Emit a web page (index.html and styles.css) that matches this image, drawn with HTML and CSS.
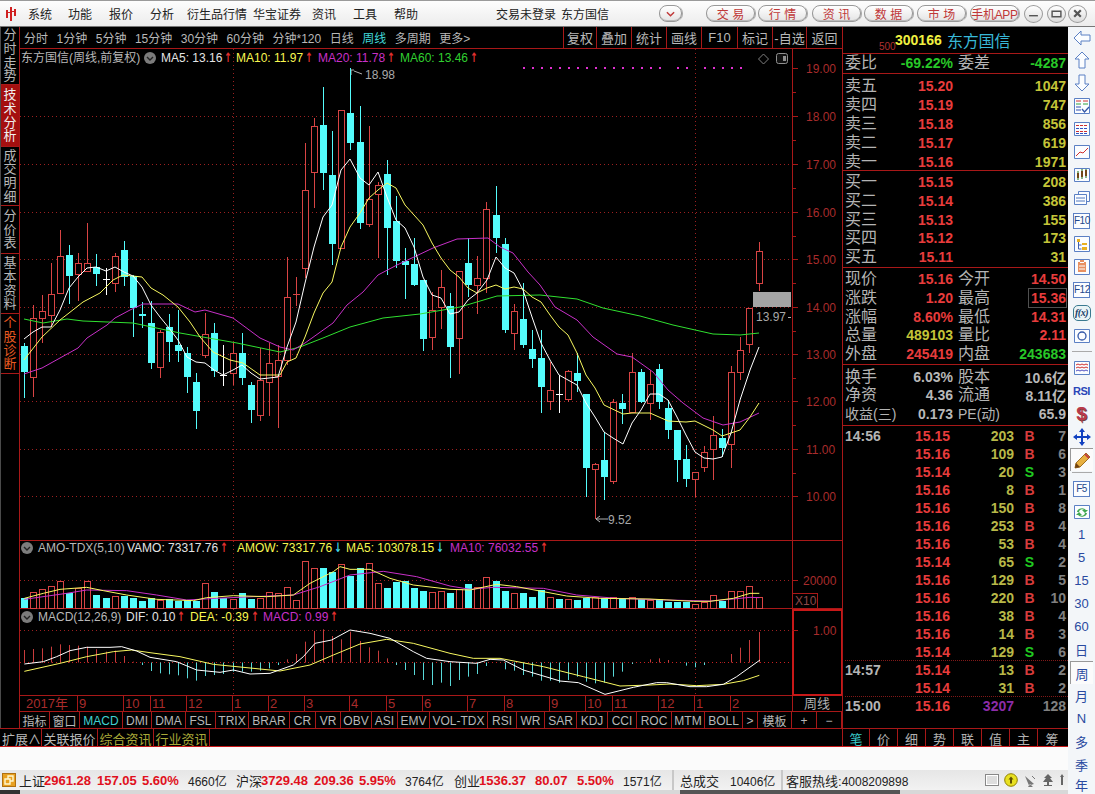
FILE: index.html
```html
<!DOCTYPE html>
<html lang="zh">
<head>
<meta charset="utf-8">
<title>东方国信 周线</title>
<link rel="stylesheet" href="styles.css">
</head>
<body>
<div class="app">
  <header class="top">
    <svg class="logo" viewBox="0 0 12 16"><path d="M1 4h2v8H1zM5 1h2v14H5zM9 3h2v7H9z"/><path d="M3 6h2v1H3zM7 5h2v1H7z"/></svg>
    <span>系统</span><span>功能</span><span>报价</span><span>分析</span><span>衍生品行情</span><span>华宝证券</span><span>资讯</span><span>工具</span><span>帮助</span>
    <span>交易未登录</span><span>东方国信</span>
    <button class="btn small"><svg viewBox="0 0 10 6" class="caret"><path d="M1 1l4 4 4-4"/></svg></button>
    <button class="btn">交 易</button><button class="btn">行 情</button><button class="btn">资 讯</button><button class="btn">数 据</button><button class="btn">市 场</button><button class="btn app-btn">手机APP</button>
    <button class="win"><svg viewBox="0 0 10 10"><path d="M1 7h8"/></svg></button>
    <button class="win"><svg viewBox="0 0 10 10"><path d="M1 3h8v5H1z"/></svg></button>
    <button class="win"><svg viewBox="0 0 10 10"><path class="heavy" d="M2 2l6 6M8 2l-6 6"/></svg></button>
  </header>

  <div class="mid">
    <div class="workspace">
      <div class="dark">
        <div class="chart-col">
          <div class="chart-main">
            <nav class="strip">
              <div>分时走势</div><div class="on">技术分析</div><div>成交明细</div><div>分价表</div><div>基本资料</div><div class="diag">个股诊断</div><div class="blank"></div>
            </nav>
            <div class="center">
              <div class="toolbar">
                <div class="periods">
                  <span>分时</span><span>1分钟</span><span>5分钟</span><span>15分钟</span><span>30分钟</span><span>60分钟</span><span>分钟*120</span><span>日线</span><span class="cur">周线</span><span>多周期</span><span>更多&gt;</span>
                </div>
                <div class="tools">
                  <span>复权</span><span>叠加</span><span>统计</span><span>画线</span><span>F10</span><span>标记</span><span>-自选</span><span>返回</span>
                </div>
              </div>
              <div class="chart">
                <svg id="plot" class="plot" viewBox="20 49 822 662" width="822" height="662"></svg>
                <div class="legend legend-k">
                  <span class="name">东方国信(周线,前复权)</span>
                  <svg class="chev" viewBox="0 0 12 12"><circle cx="6" cy="6" r="6"/><path d="M3 5l3 3 3-3"/></svg>
                  <span class="white">MA5: 13.16<b class="up">↑</b></span>
                  <span class="yellow">MA10: 11.97<b class="up">↑</b></span>
                  <span class="purple">MA20: 11.78<b class="up">↑</b></span>
                  <span class="green">MA60: 13.46<b class="up">↑</b></span>
                </div>
                <div class="legend legend-v">
                  <svg class="chev" viewBox="0 0 12 12"><circle cx="6" cy="6" r="6"/><path d="M3 5l3 3 3-3"/></svg>
                  <span class="name">AMO-TDX(5,10)</span>
                  <span class="white">VAMO: 73317.76<b class="up">↑</b></span>
                  <span class="yellow">AMOW: 73317.76<b class="dn">↓</b></span>
                  <span class="yellow">MA5: 103078.15<b class="dn">↓</b></span>
                  <span class="purple">MA10: 76032.55<b class="up">↑</b></span>
                </div>
                <div class="legend legend-m">
                  <svg class="chev" viewBox="0 0 12 12"><circle cx="6" cy="6" r="6"/><path d="M3 5l3 3 3-3"/></svg>
                  <span class="name">MACD(12,26,9)</span>
                  <span class="white">DIF: 0.10<b class="up">↑</b></span>
                  <span class="yellow">DEA: -0.39<b class="up">↑</b></span>
                  <span class="purple">MACD: 0.99<b class="up">↑</b></span>
                </div>
              </div>
              <div class="indicators">
                <span>指标</span><span>窗口</span><span class="cur">MACD</span><span>DMI</span><span>DMA</span><span>FSL</span><span>TRIX</span><span>BRAR</span><span>CR</span><span>VR</span><span>OBV</span><span>ASI</span><span>EMV</span><span>VOL-TDX</span><span>RSI</span><span>WR</span><span>SAR</span><span>KDJ</span><span>CCI</span><span>ROC</span><span>MTM</span><span>BOLL</span><span>&gt;</span><span>模板</span><span>+</span><span>−</span>
              </div>
            </div>
          </div>
          <div class="ext">
            <span>扩展∧</span><span>关联报价</span><span class="gold">综合资讯</span><span class="gold">行业资讯</span>
          </div>
        </div>

        <aside class="quote">
          <div class="q-head"><small>500</small><b>300166</b><span>东方国信</span></div>
          <div class="q-block q-ratio">
            <div class="q-row"><span>委比</span><b class="g">-69.22%</b><span>委差</span><b class="g">-4287</b></div>
          </div>
          <div class="q-block q-five q-first">
            <div class="q-row"><span>卖五</span><b class="r">15.20</b><span></span><b class="y">1047</b></div>
            <div class="q-row"><span>卖四</span><b class="r">15.19</b><span></span><b class="y">747</b></div>
            <div class="q-row"><span>卖三</span><b class="r">15.18</b><span></span><b class="y">856</b></div>
            <div class="q-row"><span>卖二</span><b class="r">15.17</b><span></span><b class="y">619</b></div>
            <div class="q-row"><span>卖一</span><b class="r">15.16</b><span></span><b class="y">1971</b></div>
          </div>
          <div class="q-block q-five">
            <div class="q-row"><span>买一</span><b class="r">15.15</b><span></span><b class="y">208</b></div>
            <div class="q-row"><span>买二</span><b class="r">15.14</b><span></span><b class="y">386</b></div>
            <div class="q-row"><span>买三</span><b class="r">15.13</b><span></span><b class="y">155</b></div>
            <div class="q-row"><span>买四</span><b class="r">15.12</b><span></span><b class="y">173</b></div>
            <div class="q-row"><span>买五</span><b class="r">15.11</b><span></span><b class="y">31</b></div>
          </div>
          <div class="q-block q-five">
            <div class="q-row"><span>现价</span><b class="r">15.16</b><span>今开</span><b class="r">14.50</b></div>
            <div class="q-row"><span>涨跌</span><b class="r">1.20</b><span>最高</span><b class="r"><em class="boxed">15.36</em></b></div>
            <div class="q-row"><span>涨幅</span><b class="r">8.60%</b><span>最低</span><b class="r">14.31</b></div>
            <div class="q-row"><span>总量</span><b class="y">489103</b><span>量比</span><b class="r">2.11</b></div>
            <div class="q-row"><span>外盘</span><b class="r">245419</b><span>内盘</span><b class="g">243683</b></div>
          </div>
          <div class="q-block q-info">
            <div class="q-row"><span>换手</span><b class="w">6.03%</b><span>股本</span><b class="w">10.6亿</b></div>
            <div class="q-row"><span>净资</span><b class="w">4.36</b><span>流通</span><b class="w">8.11亿</b></div>
            <div class="q-row"><span class="nw">收益(三)</span><b class="w">0.173</b><span class="nw">PE(动)</span><b class="w">65.9</b></div>
          </div>
          <div class="trades">
            <div class="t-row"><i>14:56</i><b>15.15</b><u>203</u><s class="buy">B</s><em>7</em></div>
            <div class="t-row"><i></i><b>15.16</b><u>109</u><s class="buy">B</s><em>6</em></div>
            <div class="t-row"><i></i><b>15.14</b><u>20</u><s class="sell">S</s><em>3</em></div>
            <div class="t-row"><i></i><b>15.16</b><u>8</u><s class="buy">B</s><em>1</em></div>
            <div class="t-row"><i></i><b>15.16</b><u>150</u><s class="buy">B</s><em>8</em></div>
            <div class="t-row"><i></i><b>15.16</b><u>253</u><s class="buy">B</s><em>4</em></div>
            <div class="t-row"><i></i><b>15.16</b><u>53</u><s class="buy">B</s><em>4</em></div>
            <div class="t-row"><i></i><b>15.14</b><u>65</u><s class="sell">S</s><em>2</em></div>
            <div class="t-row"><i></i><b>15.16</b><u>129</u><s class="buy">B</s><em>5</em></div>
            <div class="t-row"><i></i><b>15.16</b><u>220</u><s class="buy">B</s><em>10</em></div>
            <div class="t-row"><i></i><b>15.16</b><u>38</u><s class="buy">B</s><em>4</em></div>
            <div class="t-row"><i></i><b>15.16</b><u>14</u><s class="buy">B</s><em>3</em></div>
            <div class="t-row minute"><i></i><b>15.14</b><u>129</u><s class="sell">S</s><em>6</em></div>
            <div class="t-row"><i>14:57</i><b>15.14</b><u>13</u><s class="buy">B</s><em>2</em></div>
            <div class="t-row minute"><i></i><b>15.14</b><u>31</u><s class="buy">B</s><em>2</em></div>
            <div class="t-row"><i>15:00</i><b>15.16</b><u class="big">3207</u><s></s><em>128</em></div>
          </div>
          <div class="q-tabs">
            <span class="cur">笔</span><span>价</span><span>细</span><span>势</span><span>联</span><span>值</span><span>主</span><span>筹</span>
          </div>
        </aside>
      </div>

      <div class="blankband"></div>

      <footer class="status">
        <svg class="st-ico" viewBox="0 0 14 14"><rect x=".5" y=".5" width="13" height="13" fill="#e8a020" stroke="#b07010"/><path d="M3 11V6h5v5zM6 6V3h5v5H8" fill="none" stroke="#fff8d0" stroke-width="1.4"/></svg>
        <span>上证</span><b>2961.28</b><b>157.05</b><b>5.60%</b><span class="sm">4660亿</span>
        <span>沪深</span><b>3729.48</b><b>209.36</b><b>5.95%</b><span class="sm">3764亿</span>
        <span>创业</span><b>1536.37</b><b>80.07</b><b>5.50%</b><span class="sm">1571亿</span>
        <i></i>
        <span>总成交</span><span class="sm">10406亿</span>
        <i></i>
        <span>客服热线:<span class="sm">4008209898</span></span>
        <div class="tray">
          <svg viewBox="0 0 14 14" width="14" height="14"><rect x=".5" y="1.5" width="13" height="11" fill="#fff" stroke="#888"/><path d="M2 4h10M2 6h10M2 8h10M2 10h10" stroke="#bbb"/></svg>
          <svg viewBox="0 0 14 14" width="14" height="14"><circle cx="7" cy="7" r="6.3" fill="#e8e020" stroke="#908000"/><path d="M7 3.5l2.5 3H8v4H6v-4H4.500z" fill="#605000"/></svg>
          <svg viewBox="0 0 14 14" width="14" height="14"><path d="M2 3l9 8-5 1.500zM7 11l-2 3h5z" fill="#777"/><path d="M9 3l3 3" stroke="#777"/></svg>
          <svg viewBox="0 0 12 14" width="12" height="14"><path d="M6 1l4 4H8l3 4H7v3h3v1H2v-1h3V9H1l3-4H2z" fill="#666"/></svg>
          <svg viewBox="0 0 6 14" width="6" height="14"><path d="M3 1l2 3H4v8H2V4H1z" fill="#666"/></svg>
        </div>
      </footer>
      <div class="foot"></div>
    </div>

    <aside class="rail">
      <div class="it"><svg viewBox="0 0 20 20"><path class="o" d="M2 10l7-7v4h9v6H9v4z"/></svg></div>
      <div class="it"><svg viewBox="0 0 20 20"><path class="o" d="M10 2l7 7h-4v9H7V9H3z"/></svg></div>
      <div class="it"><svg viewBox="0 0 20 20"><path class="o" d="M10 18l7-7h-4V2H7v9H3z"/></svg></div>
      <div class="it"><svg viewBox="0 0 20 20"><path class="o" d="M2.500 2.500h15v15h-15z"/><path d="M4 5h5M11 5h5" stroke="#d03030"/><path d="M4 8h5M11 8h5" stroke="#30a040"/><path d="M4 11h5M4 14h5" stroke="#3050b0"/><path d="M10 13l2.500 3 4.500-5" class="o2"/></svg></div>
      <div class="it"><svg viewBox="0 0 20 20"><path class="o" d="M2.500 3.500h15v13h-15z"/><path d="M4 6.500h12" stroke="#d03030" stroke-dasharray="3 1"/><path d="M4 9.500h12" stroke="#3050c0" stroke-dasharray="3 1"/><path d="M4 12.500h12" stroke="#d03030" stroke-dasharray="3 1"/><path d="M4 14.500h12" stroke="#3050c0" stroke-dasharray="3 1"/></svg></div>
      <div class="it"><svg viewBox="0 0 20 20"><path class="o" d="M2.500 3.500h15v13h-15z"/><path d="M4 14l4-4 3 1 5-5" fill="none" stroke="#d03030"/></svg></div>
      <div class="it"><svg viewBox="0 0 20 20"><path class="o" d="M2.500 3.500h15v13h-15z"/><path d="M5 8h2v5H5zM9 6h2v6H9zM13 5h2v6h-2z" fill="#d02020"/><path d="M6 6v9M10 4v10M14 4v9" stroke="#107010"/></svg></div>
      <div class="it"><svg viewBox="0 0 20 20"><path class="o" d="M6.500 3.500h11v10h-11z"/><path class="o" d="M2.500 6.500h12v10h-12z"/><path d="M4 10h9M4 13h9" stroke="#5078c0"/></svg></div>
      <div class="it"><span class="fk">F10</span></div>
      <div class="it"><svg viewBox="0 0 20 20"><path class="o" d="M2.500 2.500h15v15h-15z"/><path d="M5 5h3v3H5z" fill="#e8b020"/><path d="M6.500 8v7h3M6.500 11h3" stroke="#4060b0" fill="none"/><path d="M10 9h5v2h-5zM10 13h5v3h-5z" fill="#e8b020"/></svg></div>
      <div class="it"><svg viewBox="0 0 20 20"><path class="o" d="M2.500 2.500h15v15h-15z"/><path d="M6 5h8v10H6zM8 3v3h4V3" fill="#e89060"/><path d="M7 9h6M7 12h6" stroke="#fff"/></svg></div>
      <div class="it"><span class="fk">F12</span></div>
      <div class="it"><span class="fx">f(x)</span></div>
      <div class="it"><svg viewBox="0 0 20 20"><path class="o" d="M2.500 3.500h15v13h-15z"/><circle cx="10" cy="10" r="4" class="o2"/></svg></div>
      <div class="rule rule-a"></div>
      <div class="it"><svg viewBox="0 0 20 20"><path class="o" d="M2.500 3.500h15v13h-15z"/><path d="M4 7l2-1 2 1 2-1 2 1 2-1 2 1M4 10l2-1 2 1 2-1 2 1 2-1 2 1" fill="none" stroke="#d03030"/><path d="M4 13l2-1 2 1 2-1 2 1 2-1 2 1" fill="none" stroke="#5050c0"/></svg></div>
      <div class="it"><span class="rsi">RSI</span></div>
      <div class="it"><span class="dollar">$</span></div>
      <div class="it"><svg viewBox="0 0 20 20"><path d="M10 1l3 4h-2v4h4V7l4 3-4 3v-2h-4v4h2l-3 4-3-4h2v-4H5v2l-4-3 4-3v2h4V5H7z" fill="#1040c0"/></svg></div>
      <div class="it sel"><svg viewBox="0 0 20 20"><path d="M3 18l1-5L14 3l4 4L8 17z" fill="#e8b040" stroke="#a07020"/><path d="M3 18l1-5 4 4z" fill="#704010"/><path d="M13 4l4 4" stroke="#c04040" stroke-width="2"/></svg></div>
      <div class="rule rule-b"></div>
      <div class="it"><span class="fk">F5</span></div>
      <div class="it"><svg viewBox="0 0 20 20"><path class="o" d="M2.500 3.500h15v13h-15z"/><path d="M5 10a5 4 0 0 1 9-2h2l-3 3-3-3h2a3 3 0 0 0-5 2zM15 11a5 4 0 0 1-9 2H4l3-3 3 3H8a3 3 0 0 0 5-2z" fill="#40a850"/></svg></div>
      <div class="it num">1</div><div class="it num">5</div><div class="it num">15</div><div class="it num">30</div><div class="it num">60</div>
      <div class="it num">日</div><div class="it num sel">周</div><div class="it num">月</div><div class="it num">N</div><div class="it num">多</div><div class="it num">季</div><div class="it num last">年</div>
    </aside>
  </div>
</div>
<script src="chart.js"></script>
</body>
</html>
```

FILE: styles.css
```css
* { box-sizing: border-box; }
html, body { margin: 0; padding: 0; }
body {
  width: 1095px; height: 794px; overflow: hidden; background: #000;
  font-family: "Liberation Sans", "Noto Sans CJK SC", sans-serif;
  font-size: 12px;
}
.app { width: 1095px; height: 794px; display: flex; flex-direction: column; }

/* title + menu */
.top {
  height: 27px; flex: none;
  display: grid; align-items: center;
  grid-template-columns: 28px 40px 41px 41px 37px 66px 59px 41px 41px 102px 65px 98px 47px 52px 54px 52px 53px 53px 54px 23px 21px 27px;
  background: linear-gradient(#fdfdfd, #ececec);
  border-top: 1px solid #9a9a9a;
  border-bottom: 1px solid #777;
  color: #222; font-size: 12px; white-space: nowrap;
}
.logo { width: 12px; height: 16px; margin-left: 5px; fill: #d02020; }
.btn {
  width: 49px; height: 17px; padding: 0;
  border: 1px solid #999; border-radius: 8px;
  background: linear-gradient(#fff, #e4e4e4);
  box-shadow: inset 0 -1px 0 #bbb, 2px 0 0 -1px #aaa;
  color: #c03838; font: 12px "Liberation Sans", "Noto Sans CJK SC", sans-serif;
  display: flex; align-items: center; justify-content: center; white-space: nowrap;
}
.btn.small { width: 23px; }
.app-btn { letter-spacing: -.3px; }
.caret { width: 9px; height: 6px; fill: none; stroke: #c03838; stroke-width: 1.6; }
.win {
  width: 19px; height: 18px; padding: 0; border: 1px solid #999; border-radius: 50%;
  background: linear-gradient(#fff, #dcdcdc);
  display: flex; align-items: center; justify-content: center;
}
.win svg { width: 11px; height: 11px; fill: none; stroke: #555; stroke-width: 1.3; }
.win .heavy { stroke-width: 2; }

.mid { flex: 1; display: flex; min-height: 0; }
.workspace { width: 1068px; flex: none; display: flex; flex-direction: column; }

/* dark terminal */
.dark { height: 720px; flex: none; display: flex; background: #000; border-bottom: 1px solid #c81818; }
.chart-col { width: 842px; flex: none; display: flex; flex-direction: column; }
.chart-main { height: 701px; flex: none; display: flex; }

.strip {
  width: 20px; flex: none; display: grid;
  grid-template-rows: 58px 62px 59px 48px 60px 60px 1fr;
  border-right: 1px solid #a81818; border-left: 1px solid #4a4a4a;
}
.strip div {
  display: flex; align-items: center; justify-content: center;
  border-bottom: 1px solid #a81818; padding: 0 2px;
  color: #b8b8b8; font-size: 13px; line-height: 13.600px; text-align: center;
  word-break: break-all;
}
.strip .on { background: #a50f0f; color: #f0f0f0; }
.strip .diag { color: #e85a20; }
.strip .blank { border-bottom: 0; }

.center { width: 822px; flex: none; display: flex; flex-direction: column; }
.toolbar {
  height: 22px; flex: none; display: flex; justify-content: space-between;
  border-bottom: 1px solid #a81818; color: #b8b8b8;
}
.periods { display: flex; align-items: center; gap: 8.500px; padding-left: 4px; white-space: nowrap; }
.periods .cur { color: #40d8d8; }
.tools { display: grid; grid-template-columns: 33px 35px 35px 35px 36px 35px 34px 36px; }
.tools span {
  display: flex; align-items: center; justify-content: center;
  border-left: 1px solid #a81818; font-size: 13px; white-space: nowrap;
}

.chart { position: relative; height: 662px; flex: none; }
.plot { display: block; }
.plot .crisp { shape-rendering: crispEdges; }
.plot .dot { stroke-dasharray: 1 3; }
.plot text { font-family: "Liberation Sans", "Noto Sans CJK SC", sans-serif; font-size: 12px; }
.plot .ax { fill: #a82c2c; }
.plot .date { font-size: 13px; }
.plot .dim { fill: #8c4848; }
.plot .note { fill: #a8a8a8; }
.plot .zh { fill: #b0b0b0; font-size: 13px; }
.legend {
  position: absolute; left: 1px; height: 14px; display: grid; align-items: center;
  font-size: 12px; white-space: nowrap; line-height: 14px;
}
.legend-k { top: 2px; grid-template-columns: 123px 17px 75px 82px 82px auto; }
.legend-v { top: 492px; grid-template-columns: 17px 89px 110px 109px 104px auto; }
.legend-m { top: 561px; grid-template-columns: 17px 88px 64px 73px auto; }
.legend .name { color: #b8b8b8; }
.legend .white { color: #e4e4e4; }
.legend .yellow { color: #f8f850; }
.legend .purple { color: #c830c8; }
.legend .green { color: #30d030; }
.chev { width: 12px; height: 12px; }
.chev circle { fill: #7c7c7c; }
.chev path { fill: none; stroke: #222; stroke-width: 1.4; }
.up, .dn {
  display: inline-block; width: 8px; text-align: center; margin-left: 1px;
  font: bold 13px/14px "DejaVu Sans", sans-serif; transform: scaleX(.7);
}
.up { color: #e03030; }
.dn { color: #40d8e8; }

.indicators {
  height: 17px; flex: none; display: grid; border-top: 1px solid #a81818;
  grid-template-columns: 30px 30px 43px 29px 34px 30px 33px 41px 26px 25px 31px 26px 32px 58px 29px 28px 32px 31px 29px 35px 33px 38px 15px 34px 25px 25px;
  color: #b8b8b8;
}
.indicators span {
  display: flex; align-items: center; justify-content: center; white-space: nowrap;
  border-right: 1px solid #a81818; font-size: 12px;
}
.indicators .cur { color: #40d0d0; }

.ext {
  height: 19px; flex: none; display: grid; grid-template-columns: 2px 40px 56px 56px 56px;
  border-top: 1px solid #a81818; color: #b8b8b8;
}
.ext::before { content: ""; }
.ext span {
  display: flex; align-items: center; justify-content: center; white-space: nowrap;
  border-right: 1px solid #a81818; font-size: 13px;
}
.ext .gold { color: #a8a838; }

/* quote panel */
.quote {
  width: 226px; flex: none; display: flex; flex-direction: column;
  border-left: 1px solid #a81818; color: #b4b4b4;
}
.q-head {
  height: 27px; flex: none; display: flex; align-items: center;
  padding-left: 36px; border-bottom: 1px solid #a81818;
}
.q-head small { color: #b03030; font-size: 10px; width: 16px; align-self: flex-end; padding-bottom: 1px; }
.q-head b { color: #f0f040; font-size: 14px; width: 52px; }
.q-head span { color: #38b8d8; font-size: 16px; letter-spacing: -.2px; }

.q-block { flex: none; border-bottom: 1px solid #a81818; padding: 1.600px 0 0 2px; }
.q-ratio { height: 20px; padding-top: 0; }
.q-five { height: 97px; }
.q-info { height: 61px; }
.q-first { padding-top: 3px; }
.q-row {
  height: 18.800px; display: grid; align-items: center;
  grid-template-columns: 44px 64px 49px 64px;
  white-space: nowrap;
}
.q-row > span { font-size: 16px; line-height: 18px; color: #b4b4b4; }
.q-row > span:nth-child(3) { padding-left: 5px; }
.q-row > b { text-align: right; font-size: 14px; font-weight: bold; }
.q-row .nw { font-size: 14px; }
.r { color: #e83c3c; }
.y { color: #c4c438; }
.g { color: #28c828; }
.w { color: #b8b8b8; }
.boxed {
  font-style: normal; padding: 1px 0 1px 2px; box-shadow: 0 0 0 1px #505050;
}

.trades { height: 302px; flex: none; padding: 1px 0 0 2px; }
.t-row {
  height: 18px; display: grid; align-items: center;
  grid-template-columns: 50px 55px 64px 31px 21px;
  font-size: 14px; font-weight: bold; line-height: 18px;
}
.t-row.minute { border-bottom: 1px dotted #801818; }
.t-row i { font-style: normal; color: #b4b4b4; }
.t-row b { text-align: right; color: #e83c3c; }
.t-row u { text-decoration: none; text-align: right; color: #b8b848; }
.t-row u.big { color: #8c2ca8; }
.t-row s { text-decoration: none; text-align: center; }
.t-row s.buy { color: #d83c3c; }
.t-row s.sell { color: #20c820; }
.t-row em { font-style: normal; text-align: right; color: #808080; white-space: nowrap; direction: rtl; }

.q-tabs {
  height: 18px; flex: none; display: grid;
  grid-template-columns: 27px repeat(7, 28px);
  border-top: 1px solid #a81818;
}
.q-tabs span {
  display: flex; align-items: center; justify-content: center;
  border-right: 1px solid #a81818; color: #b0b0b0; font-size: 13px;
}
.q-tabs span:last-child { border-right: 0; }
.q-tabs .cur { color: #38c8c8; }

/* lower band */
.blankband { height: 23px; flex: none; background: #fbfbfb; }
.status {
  height: 20px; flex: none; display: grid; align-items: center;
  grid-template-columns: 19px 25px 53px 45px 46px 48px 25px 53px 45px 46px 49px 25px 56px 42px 46px 49px 8px 50px 51px 5px 199px auto;
  background: linear-gradient(#e6e6e6, #f2f2f2);
  color: #222; font-size: 13px; white-space: nowrap;
}
.st-ico { width: 14px; height: 14px; margin-left: 2px; }
.status b { color: #e01020; font-size: 13px; }
.status .sm { font-size: 12px; }
.status > i { align-self: stretch; width: 2px; background: #c8c8c8; }
.tray { display: flex; align-items: center; gap: 5px; }
.foot { height: 4px; flex: none; background: linear-gradient(90deg, #333 0 20px, #d8d8d8 20px 680px, #555 680px 900px, #d8d8d8 900px); }

/* tool rail */
.rail {
  width: 27px; flex: none; overflow: hidden;
  background: #f3f6f9;
  display: flex; flex-direction: column; align-items: center;
}
.it {
  height: 23px; width: 23px; flex: none; display: flex; align-items: center; justify-content: center;
  color: #2a4aa0; font-size: 13px;
}
.it:first-child { height: 21px; }
.it.last { height: 17px; }
.it svg { width: 20px; height: 20px; }
.o { fill: #fbfdff; stroke: #5b80c4; stroke-width: 1; }
.o2 { fill: none; stroke: #3458a8; stroke-width: 1.3; }
.fk {
  width: 17px; height: 16px; border: 1px solid #5b80c4; background: #fbfdff;
  font-size: 10px; line-height: 14px; text-align: center; color: #24488c; letter-spacing: -.5px;
}
.fx {
  width: 18px; height: 16px; border: 1px solid #3a7a90; border-radius: 5px; background: #eaf4f6;
  font: italic bold 10px/14px "Liberation Serif", serif; text-align: center; color: #18406a; letter-spacing: -.5px;
}
.rsi { color: #2a46b8; font-size: 11px; font-weight: bold; letter-spacing: -.5px; }
.dollar { color: #b83a4a; font-size: 19px; font-weight: bold; text-shadow: 1px 1px 0 #704040; }
.sel { border-left: 1px solid #999; border-top: 1px solid #999; background: #fbfbfb; }
.rule { width: 20px; flex: none; border-top: 1px solid #aaa; }
.rule-a { height: 9px; margin-top: 4px; margin-bottom: -4px; }
.rule-b { height: 6px; margin-top: 1px; margin-bottom: -1px; }
```

FILE: chart.js
```js
// Weekly candles read as pixel rows: kind, wick top, body top, body bottom, wick bottom.
// kind: r up (hollow red), c down (solid cyan), w / x doji (white / red cross)
var candles = [
 ['c',343,346,372,398],['r',305,318,377,397],['r',295,311,318,343],['r',263,294,315,327],['r',230,256,293,293],
 ['c',245,255,276,304],['r',253,263,274,301],['r',223,263,271,271],['c',254,267,274,286],['w',268,279,279,295],
 ['r',253,256,283,292],['c',241,250,277,286],['c',275,276,308,337],['c',302,314,316,328],['c',301,323,363,369],
 ['r',330,332,367,378],['c',314,327,342,362],['c',310,345,351,362],['c',347,353,377,393],['c',373,382,411,429],
 ['r',313,334,355,358],['c',323,333,371,377],['w',345,375,375,386],['r',343,353,373,385],['c',333,353,378,385],
 ['c',382,385,410,423],['r',348,380,415,421],['r',343,363,382,416],['r',345,360,376,428],['r',257,297,360,365],
 ['x',277,294,294,306],['r',143,190,268,278],['r',118,126,172,208],['c',87,125,173,190],['c',131,175,244,265],
 ['r',110,110,248,248],['c',68,113,143,150],['c',106,142,223,229],['r',126,199,224,227],['r',182,185,194,258],
 ['c',160,174,228,275],['c',196,221,261,268],['c',248,261,265,299],['c',238,264,285,286],['c',280,280,339,351],
 ['r',292,310,337,350],['r',270,287,307,329],['c',293,306,347,378],['r',271,271,338,374],['c',238,263,285,297],
 ['r',256,278,285,314],['r',202,209,278,293],['c',186,215,238,253],['c',238,244,330,333],['r',304,311,333,350],
 ['c',283,319,345,348],['c',330,349,359,368],['c',330,358,387,413],['r',362,390,401,410],['w',375,394,394,413],
 ['r',370,371,399,402],['c',353,373,381,392],['c',394,394,468,497],['r',463,464,469,519],['c',432,460,477,500],
 ['r',399,402,481,484],['c',394,403,409,424],['r',353,372,412,413],['c',369,372,402,403],['r',370,384,403,420],
 ['c',364,369,402,409],['c',400,408,430,439],['c',430,430,460,482],['c',445,459,479,487],['r',472,472,479,497],
 ['r',446,452,467,472],['r',416,435,449,480],['c',429,438,448,457],['r',366,372,444,468],['r',337,350,372,380],
 ['r',308,308,344,353],['r',242,251,283,291]
];
var volY = [205,185,176,169,153,188,174,154,195,205,198,198,203,213,205,210,208,212,210,213,160,186,205,206,190,208,205,187,190,172,210,92,115,114,125,103,138,115,100,160,175,155,152,173,182,187,183,190,178,162,170,140,153,183,190,190,202,180,200,207,207,210,205,200,205,200,204,200,206,211,207,216,215,215,222,215,196,212,184,184,169,202];
var macdY = [360,357,355,350,343,345,347,350,358,365,362,378,395,405,423,430,433,436,445,452,438,435,432,425,425,425,422,415,405,388,372,335,303,298,318,328,305,333,352,362,385,405,420,435,450,465,458,468,450,440,432,408,398,418,422,435,440,452,452,458,450,440,455,460,458,440,425,402,398,388,385,390,398,407,412,405,398,396,372,353,330,306];

var ma5 = [[24,339],[33,332],[42,327],[51,327],[60,310],[69,288],[78,277],[87,268],[96,267],[106,271],[115,267],[124,272],[133,276],[142,287],[151,305],[160,317],[169,328],[178,340],[187,357],[196,362],[205,363],[214,370],[223,375],[233,370],[242,365],[251,373],[260,379],[269,378],[278,377],[287,347],[296,322],[305,283],[314,247],[323,217],[332,205],[341,170],[350,159],[360,178],[369,185],[378,172],[387,197],[396,220],[405,228],[414,247],[423,277],[432,295],[441,298],[450,314],[459,312],[468,300],[477,293],[487,280],[496,257],[505,268],[514,273],[523,290],[532,317],[541,343],[550,360],[559,375],[568,380],[577,385],[586,403],[595,417],[604,432],[613,438],[623,444],[632,423],[641,410],[650,394],[659,394],[668,400],[677,417],[686,435],[695,452],[704,458],[713,459],[722,457],[731,433],[740,400],[750,370],[759,347]];
var ma10 = [[24,360],[42,337],[60,320],[69,313],[83,302],[100,293],[113,280],[123,275],[142,277],[151,288],[163,295],[178,307],[190,322],[200,337],[213,352],[230,360],[243,363],[260,375],[280,375],[287,362],[296,358],[305,337],[314,313],[323,293],[332,282],[341,247],[350,227],[360,213],[369,198],[378,190],[387,183],[396,188],[405,205],[423,225],[432,243],[441,258],[450,270],[459,277],[468,288],[477,293],[487,288],[496,285],[505,289],[514,287],[523,289],[532,297],[541,302],[550,315],[559,327],[568,335],[577,353],[586,375],[595,388],[604,405],[623,414],[632,413],[650,413],[668,421],[686,422],[695,421],[713,430],[722,436],[740,430],[750,417],[759,403]];
var ma20 = [[24,374],[42,368],[60,358],[78,348],[87,338],[107,325],[115,318],[130,310],[143,304],[178,304],[195,312],[205,310],[233,318],[260,338],[280,347],[293,350],[305,343],[333,323],[347,305],[363,292],[378,275],[397,265],[414,257],[433,248],[457,239],[488,238],[500,247],[513,253],[528,272],[540,285],[555,307],[577,320],[593,337],[617,354],[632,357],[653,372],[668,390],[683,403],[703,418],[723,425],[740,422],[759,413]];
var ma60 = [[24,319],[43,323],[67,319],[83,321],[133,323],[180,333],[237,343],[280,352],[300,347],[323,338],[350,327],[383,318],[420,314],[460,307],[497,296],[540,295],[577,299],[603,308],[640,316],[673,325],[713,334],[740,335],[759,333]];

// Zoom-space points for the lower panes: x / 3, y / 3 + 530
function z(list, dx) { return list.map(function (p) { return [p[0] / 3 + (dx || 0), p[1] / 3 + 530]; }); }
var volYel = z([[73,205],[130,190],[180,178],[260,172],[310,182],[380,195],[470,208],[580,212],[620,203],[700,197],[800,200],[880,195],[930,160],[1000,125],[1020,110],[1050,118],[1110,118],[1170,145],[1240,165],[1350,178]])
  .concat(z([[60,180],[140,163],[200,170],[280,185],[350,198],[450,205],[600,207],[730,214],[780,214],[850,205],[900,190],[928,190]], 450));
var volMag = z([[73,208],[200,190],[260,180],[380,182],[470,195],[560,210],[650,205],[760,200],[880,195],[960,170],[1050,135],[1150,124],[1250,140],[1350,168]])
  .concat(z([[60,178],[130,172],[280,175],[380,195],[500,205],[650,210],[780,213],[850,207],[900,202],[928,203]], 450));
var dif = z([[73,402],[130,395],[170,380],[210,362],[260,352],[330,352],[365,350],[410,363],[450,382],[530,395],[590,420],[660,427],[700,420],[750,432],[810,430],[880,405],[910,380],[945,340],[995,330],[1050,300],[1110,310],[1170,325],[1240,365],[1280,385],[1350,395]])
  .concat(z([[80,400],[120,388],[160,390],[220,420],[330,453],[385,458],[465,493],[550,472],[620,458],[650,458],[720,470],[770,470],[820,463],[860,440],[930,390]], 450));
var dea = z([[73,424],[180,400],[260,380],[340,365],[395,360],[450,368],[540,380],[640,403],[780,417],[840,423],[930,405],[1000,375],[1080,342],[1160,328],[1240,340],[1350,370]])
  .concat(z([[70,385],[150,385],[280,410],[400,440],[510,468],[600,465],[660,462],[740,467],[820,463],[880,452],[928,436]], 450));

var RED = '#d84444', CYAN = '#54fcfc', LINE = '#a81818', GRID = '#9c2020';
var out = [];
function line(x1, y1, x2, y2, stroke, cls) {
  out.push('<line x1="' + x1 + '" y1="' + y1 + '" x2="' + x2 + '" y2="' + y2 + '" stroke="' + stroke + '"' + (cls ? ' class="' + cls + '"' : '') + '/>');
}
function rect(x, y, w, h, fill, stroke) {
  out.push('<rect x="' + x + '" y="' + y + '" width="' + w + '" height="' + h + '" fill="' + fill + '"' + (stroke ? ' stroke="' + stroke + '"' : '') + ' class="crisp"/>');
}
function text(x, y, s, cls, anchor) {
  out.push('<text x="' + x + '" y="' + y + '" class="' + cls + '"' + (anchor ? ' text-anchor="' + anchor + '"' : '') + '>' + s + '</text>');
}
function poly(pts, stroke) {
  out.push('<polyline fill="none" stroke="' + stroke + '" points="' + pts.map(function (p) { return p.join(','); }).join(' ') + '"/>');
}
function cx(i) {
  var extra = 0;
  [9, 23, 37, 52, 67, 81].forEach(function (b) { if (i >= b) extra++; });
  return 24 + 9 * i + extra + 0.5;
}

// grid
[116, 164, 212, 259, 307, 353.5, 401, 449, 496].forEach(function (y) {
  line(20, Math.round(y) + .5, 792, Math.round(y) + .5, GRID, 'dot');
});
[233.5, 695.5].forEach(function (x) { line(x, 49, x, 695, GRID, 'dot'); });
line(20, 580.5, 792, 580.5, GRID, 'dot');
line(20, 630.5, 792, 630.5, GRID, 'dot');
line(20, 662.5, 792, 662.5, '#c82020', 'dot');

// pane frames
line(20, 540.5, 842, 540.5, LINE);
line(20, 608.5, 842, 608.5, LINE);
line(20, 695.5, 842, 695.5, LINE);
line(792.5, 49, 792.5, 711, LINE);
out.push('<rect x="792.5" y="609.5" width="49" height="85.5" fill="none" stroke="#c81818" stroke-width="2" class="crisp"/>');
rect(792.5, 593.5, 25, 15, 'none', LINE);

// price axis
[[68,'19.00'],[116,'18.00'],[164,'17.00'],[212,'16.00'],[259,'15.00'],[307,'14.00'],[353.5,'13.00'],[401,'12.00'],[449,'11.00'],[496,'10.00']].forEach(function (t, i) {
  var y = Math.round(t[0]) + .5;
  line(792, y, 798, y, LINE);
  if (i < 9) line(792, y + 24, 796, y + 24, LINE);
  text(806, y + 4.5, t[1], 'ax');
});
line(792, 580.5, 798, 580.5, LINE);
text(803, 585, '20000', 'ax');
line(792, 630.5, 798, 630.5, LINE);
text(813, 635, '1.00', 'ax');
text(795, 605, 'X10', 'ax dim');
out.push('<text x="804" y="708" class="zh">周线</text>');

// dates
[[25,'2017年',0],[78,'9',77],[124,'10',123],[151,'11',150],[187,'12',186],[233,'1',232],[269,'2',268],[305,'3',304],[350,'4',349],[387,'5',386],[423,'6',422],[468,'7',467],[505,'8',504],[550,'9',549],[586,'10',585],[613,'11',612],[659,'12',658],[695,'1',694],[731,'2',730]].forEach(function (d) {
  if (d[2]) line(d[2] + .5, 695, d[2] + .5, 711, LINE);
  text(d[0] + 1, 708, d[1], 'ax date');
});

// top-right marks
var dots = [];
for (var k = 55; k <= 70; k++) dots.push(k);
dots.push(72, 73, 75, 76, 77, 78, 79);
dots.forEach(function (i) {
  rect(Math.floor(cx(i)), 67, 2, 2, '#e030d0');
});
out.push('<path d="M758.500 59l5-5 5 5-5 5z" fill="none" stroke="#808080"/>');
out.push('<rect x="776.500" y="53.500" width="11" height="10" rx="2" fill="#111" stroke="#909090"/><rect x="783" y="56" width="3" height="5" fill="#909090"/>');

// highest / lowest / current annotations
out.push('<path d="M351 70h3M351 70v5M354 71l8 3" fill="none" stroke="#b0b0b0"/>');
text(365, 79, '18.98', 'note');
out.push('<path d="M596 519h12M596 519l4-3M596 519l4 3" fill="none" stroke="#b0b0b0"/>');
text(608, 524, '9.52', 'note');
rect(753, 292, 38, 15, '#a4a4a4');
text(756, 321, '13.97', 'note');
line(788, 317.5, 791, 317.5, '#b0b0b0');

// candles
candles.forEach(function (c, i) {
  var x = cx(i), kind = c[0], col = kind === 'c' ? CYAN : kind === 'r' ? RED : kind === 'w' ? '#ffffff' : RED;
  if (kind === 'w' || kind === 'x') {
    line(x, c[1], x, c[4], col);
    line(x - 3.5, c[2] + .5, x + 3.5, c[2] + .5, col);
    return;
  }
  line(x, c[1], x, c[2], col);
  line(x, c[3], x, c[4], col);
  if (kind === 'c') rect(x - 3.5, c[2], 7, c[3] - c[2], col);
  else rect(x - 3, c[2] + .5, 6, c[3] - c[2], '#000', col);
});

// volume bars
volY.forEach(function (v, i) {
  var x = cx(i), top = Math.round(v / 3 + 530), k = candles[i][0];
  if (k === 'r' || k === 'x') rect(x - 3, top + .5, 6, 608 - top, '#000', RED);
  else rect(x - 3.5, top, 7, 608 - top, CYAN);
});

// MACD histogram
macdY.forEach(function (v, i) {
  var y = v / 3 + 530;
  if (Math.abs(v - 398) < 2) return;
  line(cx(i), 662.5, cx(i), y, v < 398 ? '#c83c3c' : '#58d8d8');
});

// average lines
poly(ma60, '#30e030');
poly(ma20, '#c830c8');
poly(ma10, '#f8f860');
poly(ma5, '#ffffff');
poly(volMag, '#c830c8');
poly(volYel, '#f8f860');
poly(dea, '#f8f860');
poly(dif, '#ffffff');

document.getElementById('plot').innerHTML = out.join('');
```
